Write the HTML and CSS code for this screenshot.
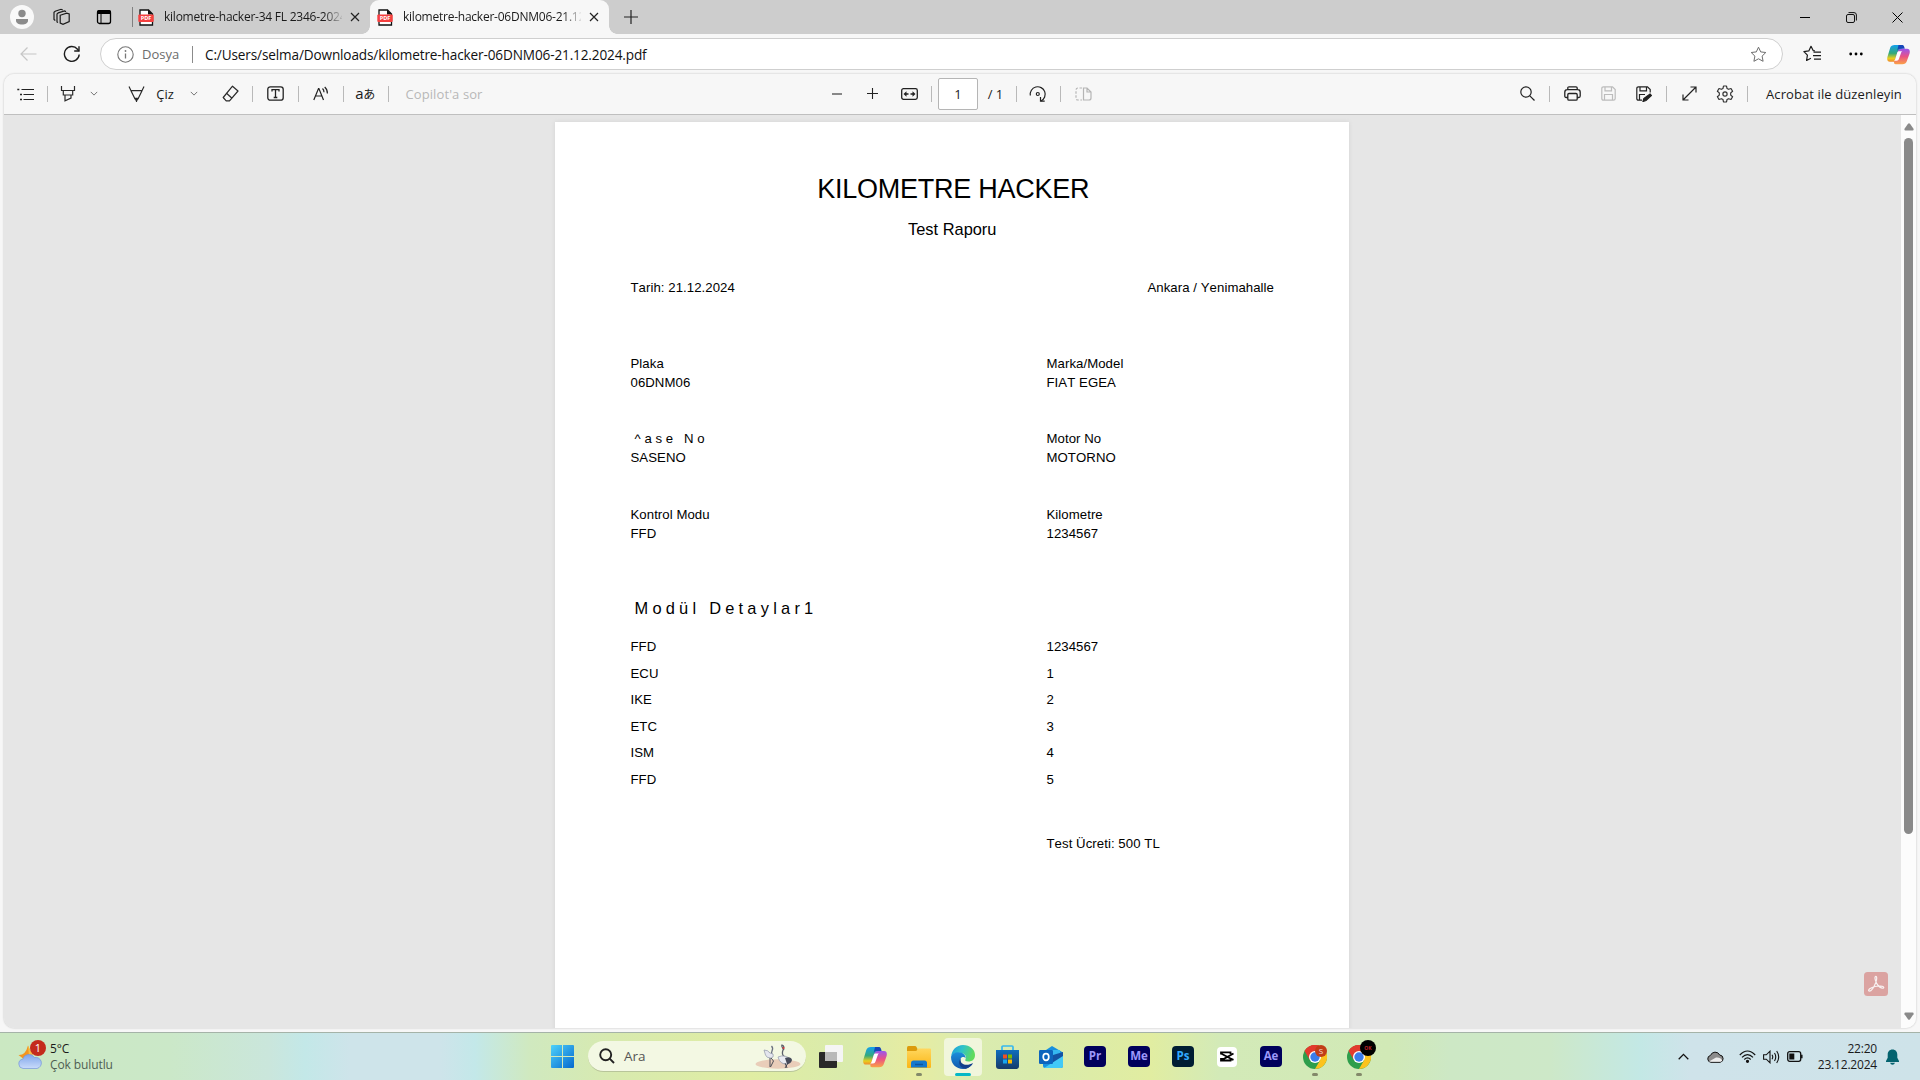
FILE: index.html
```html
<!DOCTYPE html>
<html lang="tr">
<head>
<meta charset="utf-8">
<title>kilometre-hacker-06DNM06-21.12.2024.pdf</title>
<link rel="stylesheet" href="styles.css">
</head>
<body>
<svg class="defs" width="0" height="0" aria-hidden="true">
  <defs>
    <linearGradient id="cpA" x1="0" y1="0" x2="0" y2="1"><stop offset="0" stop-color="#12a0ee"/><stop offset=".5" stop-color="#35a97a"/><stop offset=".8" stop-color="#e8cf1d"/><stop offset="1" stop-color="#f08a2c"/></linearGradient>
    <linearGradient id="cpB" x1="0" y1="0" x2="0" y2="1"><stop offset="0" stop-color="#9a55ee"/><stop offset=".5" stop-color="#ea5285"/><stop offset="1" stop-color="#fba246"/></linearGradient>
    <linearGradient id="win" x1="0" y1="0" x2="1" y2="1"><stop offset="0" stop-color="#4fd2fa"/><stop offset="1" stop-color="#0468cf"/></linearGradient>
    <linearGradient id="edgeA" x1="0" y1="0" x2="1" y2=".3"><stop offset="0" stop-color="#1a9be0"/><stop offset=".5" stop-color="#2fc3c8"/><stop offset="1" stop-color="#5fdb5c"/></linearGradient>
    <linearGradient id="edgeB" x1="0" y1="0" x2="0" y2="1"><stop offset="0" stop-color="#1b8edb"/><stop offset="1" stop-color="#1158ad"/></linearGradient>
    <linearGradient id="fold" x1="0" y1="0" x2="0" y2="1"><stop offset="0" stop-color="#ffd75e"/><stop offset="1" stop-color="#fbb616"/></linearGradient>
    <linearGradient id="store" x1="0" y1="0" x2="0" y2="1"><stop offset="0" stop-color="#0e6ebe"/><stop offset="1" stop-color="#173a69"/></linearGradient>
    <linearGradient id="cloud" x1="0" y1="0" x2="0" y2="1"><stop offset="0" stop-color="#7fa5ea"/><stop offset="1" stop-color="#c9dbfb"/></linearGradient>
    <symbol id="i-pdf" viewBox="0 0 16 17"><path d="M2 16V1h8.500l4 4v11z" fill="#fff" stroke="#111" stroke-width="1.300"/><path d="M10 .6V5.500h5z" fill="#111"/><rect x=".3" y="5.500" width="15.400" height="7.500" rx="1" fill="#f5403f"/><text x="8" y="11.300" text-anchor="middle" class="pdf-label">PDF</text></symbol>
    <symbol id="i-close" viewBox="0 0 10 10"><path d="M1 1l8 8M9 1L1 9" fill="none" stroke="#222" stroke-width="1.200"/></symbol>
    <symbol id="i-down" viewBox="0 0 10 6"><path d="M1 1l4 4 4-4" fill="none" stroke="#555" stroke-width="1"/></symbol>
    <symbol id="i-copilot" viewBox="0 0 24 22"><path d="M8 1h7c1.500 0 2 1 1.500 2.500L13 15c-.8 2.500-2 3.500-4.500 3.500H3C.5 18.500-.3 16.500.4 13.500L3.300 4C4 2 5.500 1 8 1z" fill="url(#cpA)"/><path d="M12 1h4c1.500 0 2 1.500 2.600 4H13.500c-1.500 0-2.500 1-3 2.500z" fill="#1646b9"/><path d="M16 21.200H9c-1.500 0-2-1-1.500-2.500L11 8.500C11.800 6 13 5 15.500 5H21c2.500 0 3.300 2 2.600 5l-2.900 8.200c-.7 2-2.200 3-4.700 3z" fill="url(#cpB)"/><path d="M14 7.500h-1.500c-1 0-1.500.6-1.800 1.500L8.500 16c-.3.800-.8 1.300-1.500 1.500h3c1.500 0 2-.8 2.500-2l2.300-6.500c.2-.7.600-1.200 1.200-1.500z" fill="#fff"/></symbol>
    <symbol id="i-chrome" viewBox="0 0 24 24"><circle cx="12" cy="12" r="12" fill="#2e9e4c"/><path d="M1.600 6A12 12 0 0 1 22.400 6H12z" fill="#e23b2e"/><path d="M1.600 6A12 12 0 0 1 22.400 6L12 6.500 6.800 15z" fill="#e23b2e"/><path d="M22.400 6A12 12 0 0 1 12 24l5.200-9L14 6z" fill="#fcc31e"/><circle cx="12" cy="12" r="6" fill="#fff"/><circle cx="12" cy="12" r="4.700" fill="#3b7cec"/></symbol>
  </defs>
</svg>

<header class="tabbar">
  <div class="tab-tools">
    <svg width="24" height="24" viewBox="0 0 24 24"><circle cx="12" cy="12" r="12" fill="#f9f9f9"/><circle cx="12" cy="8.500" r="3.700" fill="#8b8b8b"/><path d="M6 14h12v1.500c0 2.500-2.500 4-6 4s-6-1.500-6-4z" fill="#8b8b8b"/></svg>
    <svg width="18" height="18" viewBox="0 0 18 18" fill="none" stroke="#1b1b1b" stroke-width="1.200"><path d="M7.200 7.200l6.500-2 2.500.8v7.500l-6.200 2.900-2.800-1.300z"/><path d="M5 14.500l-1-.6V6l1.300-1.200L11.500 3l1.500.6M2.300 12.500L1 11.500V4.300l1.200-1L8 1.300l1.800.7"/></svg>
    <svg width="16" height="16" viewBox="0 0 16 16"><rect x="1.500" y="1.700" width="13" height="12.800" rx="2" fill="none" stroke="#000" stroke-width="1.300"/><path d="M1 5V3q0-2 2-2h10q2 0 2 2v2z"/><path d="M5 5v9" stroke="#000" stroke-width="1"/></svg>
  </div>
  <div class="tab tab-idle">
    <svg class="tab-icon"><use href="#i-pdf"/></svg><span class="tab-title">kilometre-hacker-34 FL 2346-2024</span><svg class="tab-close"><use href="#i-close"/></svg>
  </div>
  <div class="tab tab-active">
    <svg class="tab-icon"><use href="#i-pdf"/></svg><span class="tab-title">kilometre-hacker-06DNM06-21.12</span><svg class="tab-close"><use href="#i-close"/></svg>
  </div>
  <svg class="new-tab" width="14" height="14" viewBox="0 0 14 14"><path d="M7 0v14M0 7h14" stroke="#222" stroke-width="1.200"/></svg>
  <div class="window-buttons">
    <svg width="10" height="10"><path d="M0 5.500h10" stroke="#000"/></svg>
    <svg width="11" height="11" viewBox="0 0 11 11" fill="none" stroke="#111"><rect x=".5" y="2.500" width="8" height="8" rx="1.500"/><path d="M2.500 .6H8q2.400 0 2.400 2.400v5.500"/></svg>
    <svg width="11" height="11" viewBox="0 0 11 11"><path d="M.5 .5l10 10M10.500 .5l-10 10" stroke="#000"/></svg>
  </div>
</header>

<nav class="addressbar">
  <svg class="back" width="17" height="14" viewBox="0 0 17 14" fill="none" stroke="#c6c6c6" stroke-width="1.200"><path d="M16.500 7H1M7.500 .5L1 7l6.500 6.500"/></svg>
  <svg class="reload" width="18" height="18" viewBox="0 0 18 18" fill="none" stroke="#1d1d1d" stroke-width="1.400"><path d="M16.200 9.500A7.400 7.400 0 1 1 14.500 4.200L15.800 6"/><path d="M16 1.200V6h-4.800"/></svg>
  <div class="url-box">
    <svg width="17" height="17" viewBox="0 0 17 17"><circle cx="8.500" cy="8.500" r="7.700" fill="none" stroke="#777" stroke-width="1.100"/><path d="M8.500 7.500v5" stroke="#777" stroke-width="1.300"/><circle cx="8.500" cy="5" r=".9" fill="#777"/></svg>
    <span class="scheme">Dosya</span>
    <span class="url">C:/Users/selma/Downloads/kilometre-hacker-06DNM06-21.12.2024.pdf</span>
    <svg class="star" width="17" height="17" viewBox="0 0 17 17"><path d="M8.500 1.200l2.200 4.700 5.100.6-3.700 3.600 1 5.200-4.600-2.500-4.600 2.500 1-5.200L1.200 6.500l5.100-.6z" fill="none" stroke="#6d6d6d" stroke-linejoin="round"/></svg>
  </div>
  <div class="browser-actions">
    <svg width="18" height="18" viewBox="0 0 18 18" fill="none" stroke="#1a1a1a" stroke-width="1.200" stroke-linejoin="round"><path d="M12 5.900L10.300 5.700 8 1.300 5.800 5.900.9 6.600l3.500 3.500-.8 5.400 4.300-2.300"/><path d="M10.500 7.200H18M10 10.700h8M11 14.200h7"/></svg>
    <svg width="14" height="4" viewBox="0 0 14 4"><circle cx="1.700" cy="2" r="1.400"/><circle cx="7" cy="2" r="1.400"/><circle cx="12.300" cy="2" r="1.400"/></svg>
    <svg width="23" height="21"><use href="#i-copilot"/></svg>
  </div>
</nav>

<main class="viewer">
  <div class="toolbar">
    <div class="tools-left">
      <svg width="17" height="14" viewBox="0 0 17 14"><path d="M4.500 2.500H17M6.500 7.500H17M6.500 12.500H17" stroke="#222" stroke-width="1.200"/><path d="M.3 2.500h2M3 7.500h2M3 12.500h2" stroke="#222" stroke-width="1.700"/></svg>
      <i class="sep"></i>
      <svg width="16" height="17" viewBox="0 0 16 17" fill="none" stroke="#2a2a2a" stroke-width="1.200"><path d="M1.500 1v4.500h13V1M3.300 5.500V10h9.400V5.500M5 10v5.800l6-2.800v-3"/></svg>
      <svg width="8" height="5"><use href="#i-down"/></svg>
      <svg class="pen" width="17" height="17" viewBox="0 0 17 17" fill="none" stroke="#2a2a2a" stroke-width="1.200"><path d="M1 1.500l2 4.200h11l2-4.200M3 5.700l4 8.300h3l4-8.300"/><path d="M7.300 13.300h2.400l-1.200 3z" fill="#222"/></svg>
      <span class="label">Çiz</span>
      <svg width="8" height="5"><use href="#i-down"/></svg>
      <svg width="17" height="17" viewBox="0 0 17 17" fill="none" stroke="#2a2a2a" stroke-width="1.200" stroke-linejoin="round"><path d="M10.500 1.200L16 6 7.500 15.800H4.200L1.200 12.500z"/><path d="M4.500 8.300l5.500 4.900"/></svg>
      <i class="sep"></i>
      <svg width="17" height="15" viewBox="0 0 17 15" fill="none" stroke="#222" stroke-width="1.300"><rect x=".8" y=".8" width="15.400" height="13.400" rx="2.500"/><path d="M5 5.500V3.700h7v1.800M8.500 3.700v8M6.700 11.500h3.600"/></svg>
      <i class="sep"></i>
      <svg width="16" height="15" viewBox="0 0 16 15" fill="none" stroke="#222" stroke-width="1.200"><path d="M.8 14L5.500 2.500h.4L10.500 14M2.500 10h6.400M9.500 2.500Q11 3.800 11 6.300M11.700 1Q14.500 3.500 14.400 7.500"/></svg>
      <i class="sep"></i>
      <span class="translate">a<span class="kana">あ</span></span>
      <i class="sep"></i>
      <span class="copilot-ask">Copilot'a sor</span>
    </div>
    <div class="tools-center">
      <svg width="10" height="2"><path d="M0 1h10" stroke="#888" stroke-width="2"/></svg>
      <svg width="11" height="11"><path d="M5.500 0v11M0 5.500h11" stroke="#222" stroke-width="1.100"/></svg>
      <svg width="17" height="12" viewBox="0 0 17 12"><rect x=".7" y=".7" width="15.600" height="10.600" rx="1.800" fill="none" stroke="#222" stroke-width="1.300"/><path d="M2.500 6l3-2.700v2h2v1.400h-2v2zM14.500 6l-3-2.700v2h-2v1.400h2v2z" fill="#222"/></svg>
      <i class="sep"></i>
      <span class="page-input">1</span>
      <span class="page-count">/ 1</span>
      <i class="sep"></i>
      <svg width="18" height="18" viewBox="0 0 18 18" fill="none" stroke="#222" stroke-width="1.200"><path d="M1.300 10.500A7.500 7.500 0 1 1 12 16"/><path d="M11.500 12v4.200h4.200"/><circle cx="8.800" cy="9" r="1.500"/></svg>
      <i class="sep"></i>
      <svg width="17" height="14" viewBox="0 0 17 14" fill="none" stroke="#b5b5b5" stroke-width="1.200"><path d="M7 1H3Q1 1 1 3v8q0 2 2 2h4" stroke-dasharray="2.500 1.500"/><path d="M8.500 1H12l4 4v6q0 2-2 2H8.500zM12 1v4h4"/></svg>
    </div>
    <div class="tools-right">
      <svg width="15" height="15" viewBox="0 0 15 15" fill="none" stroke="#222" stroke-width="1.200"><circle cx="6" cy="6" r="5.200"/><path d="M9.800 9.800l4.700 4.700"/></svg>
      <i class="sep"></i>
      <svg width="17" height="15" viewBox="0 0 17 15" fill="none" stroke="#222" stroke-width="1.300"><path d="M3.800 11.500H2.300Q.8 11.500.8 10V6.200Q.8 3.700 3.300 3.700h10.400q2.500 0 2.500 2.500V10q0 1.500-1.500 1.500h-1.500M3.800 3.700V2Q3.800.8 5 .8h7q1.200 0 1.200 1.200v1.700"/><rect x="3.800" y="7.500" width="9.400" height="6.700" rx="1.200"/></svg>
      <svg width="15" height="15" viewBox="0 0 15 15" fill="none" stroke="#bcbcbc" stroke-width="1.200"><path d="M.8 2.500Q.8.800 2.500.8h9l2.700 2.700v9q0 1.700-1.700 1.700h-10Q.8 14.200.8 12.500zM4 .8v4h6.500v-4M3.500 14V8.500h8V14"/></svg>
      <svg width="16" height="16" viewBox="0 0 16 16" fill="none" stroke="#222" stroke-width="1.200"><path d="M6 14.200H2.500Q.8 14.200.8 12.500v-10Q.8.800 2.500.8h9l2.700 2.700v3M4 .8v4h6.500v-4M3.500 14V8.500H9"/><path d="M14 8l1.500 1.500-5.500 5-3 1 .8-3z" fill="#222"/></svg>
      <i class="sep"></i>
      <svg width="15" height="15" viewBox="0 0 15 15" fill="none" stroke="#222" stroke-width="1.200"><path d="M1 14L14 1M8.500 1H14v5.500M1 8.500V14h5.500"/></svg>
      <svg width="18" height="18" viewBox="0 0 18 18" fill="none" stroke="#333" stroke-width="1.200" stroke-linejoin="round"><path d="M7.500 1h3l.5 2.400 1.600.9 2.400-.8 1.600 2.700-1.900 1.700v2.200l1.900 1.700-1.600 2.700-2.400-.8-1.600.9-.5 2.400h-3L7 14.600l-1.600-.9-2.400.8-1.600-2.700 1.900-1.700V7.900L1.400 6.200 3 3.500l2.400.8L7 3.400z"/><circle cx="9" cy="9" r="2.100"/></svg>
      <i class="sep"></i>
      <span class="acrobat">Acrobat ile düzenleyin</span>
    </div>
  </div>

  <div class="canvas">
    <div class="document-area">
      <article class="sheet">
        <h1>KILOMETRE HACKER</h1>
        <p class="subtitle">Test Raporu</p>
        <div class="meta"><span>Tarih: 21.12.2024</span><span class="place">Ankara / Yenimahalle</span></div>
        <div class="fields">
          <div>Plaka<br>06DNM06</div><div>Marka/Model<br>FIAT EGEA</div>
          <div><span class="spaced">^ase No</span><br>SASENO</div><div>Motor No<br>MOTORNO</div>
          <div>Kontrol Modu<br>FFD</div><div>Kilometre<br>1234567</div>
        </div>
        <h2>Modül Detaylar1</h2>
        <div class="modules">
          <span>FFD</span><span>1234567</span>
          <span>ECU</span><span>1</span>
          <span>IKE</span><span>2</span>
          <span>ETC</span><span>3</span>
          <span>ISM</span><span>4</span>
          <span>FFD</span><span>5</span>
        </div>
        <p class="fee">Test Ücreti: 500 TL</p>
      </article>
      <svg class="acrobat-badge" width="24" height="24" viewBox="0 0 24 24"><rect width="24" height="24" rx="3.500" fill="#dba3a1"/><path d="M11.500 4.500c1.500-.6 1.600 2.500.3 6C10 15 7 19.500 5 19c-1.500-.8 1.500-3.500 6-4.500 4-.9 8.500-.6 8.800.9.100 1.500-3 1-5.300-1.400C12 11.500 10 5.500 11.500 4.500z" fill="none" stroke="#f8f1f1" stroke-width="1.200"/></svg>
    </div>
    <div class="scrollbar">
      <svg width="10" height="8" viewBox="0 0 10 8"><path d="M4 .8q1-1 2 0l3.500 5Q10 7.500 8.500 7.500h-7Q0 7.500.5 5.800z" fill="#8a8a8a"/></svg>
      <div class="thumb"></div>
      <svg width="10" height="8" viewBox="0 0 10 8"><path d="M4 7.200q1 1 2 0l3.500-5Q10 .5 8.500 .5h-7Q0 .5.500 2.200z" fill="#8a8a8a"/></svg>
    </div>
  </div>
</main>

<footer class="taskbar">
  <div class="weather">
    <div class="weather-icon">
      <svg width="24" height="26" viewBox="0 0 24 26"><path d="M10 1.500q1.500 5 5 8.500L8 16l-3-1.500L.5 11q7 .5 9.500-9.500z" fill="#f4951d"/><path d="M10 1.500q1.500 5 5 8.500l-4 2z" fill="#f6bc45"/><path d="M5 24.500a4.700 4.700 0 0 1-.3-9.300A6.500 6.500 0 0 1 16.500 13.500a5.500 5.500 0 0 1 2.500 11z" fill="url(#cloud)" stroke="#7596da" stroke-width=".7"/></svg>
      <span class="weather-badge">1</span>
    </div>
    <div class="weather-text"><span class="temp">5°C</span><span class="sky">Çok bulutlu</span></div>
  </div>

  <div class="start"><svg width="23" height="23" viewBox="0 0 23 23"><path d="M0 1q0-1 1-1h10v11H0zM12 0h10q1 0 1 1v10H12zM0 12h11v11H1q-1 0-1-1zM12 12h11v10q0 1-1 1H12z" fill="url(#win)"/></svg></div>
  <div class="search">
    <svg width="16" height="16" viewBox="0 0 16 16" fill="none" stroke="#222" stroke-width="1.900"><circle cx="6.700" cy="6.700" r="5.500"/><path d="M10.700 10.700l4.300 4.300"/></svg>
    <span>Ara</span>
    <svg class="cranes" width="46" height="25" viewBox="0 0 46 25"><ellipse cx="23" cy="20" rx="22.500" ry="4.700" fill="#e9cdb9"/><path d="M16.500 2q2 2 .5 5-1 2 0 4" fill="none" stroke="#6a7080" stroke-width="1.300"/><path d="M9 6q4 0 6 3l3 1q1 4-2.500 4-4 0-5-3z" fill="#e4e6ee" stroke="#8f96a8" stroke-width=".7"/><path d="M15 14v9M16 14l2.500 3-3 6" fill="none" stroke="#3b3f4c" stroke-width=".9"/><path d="M29 6q-3-4-2-5 3 1 1 5-2 5 2 7" fill="none" stroke="#5c606c" stroke-width="1.300"/><path d="M23 13q7-3 12 2l-2 5q-8 1-10-7z" fill="#e9ebf2" stroke="#8f96a8" stroke-width=".7"/><path d="M30 14q6-2 7 2-1 4-5 4z" fill="#464b5a"/><path d="M30 19l2 5M33 19l-3 5" stroke="#3b3f4c" stroke-width=".9"/><circle cx="28.500" cy="4" r="1.100" fill="#d8383c"/></svg>
  </div>
  <div class="apps">
    <div class="app"><svg width="24" height="23" viewBox="0 0 24 23"><rect x="6" y="0" width="18" height="17" rx="1" fill="#f5f5f5"/><rect y="7" width="18" height="16" rx="1" fill="#292929"/><path d="M6 7h12v9H6z" fill="#b9b9b9"/></svg></div>
    <div class="app"><svg width="24" height="22"><use href="#i-copilot"/></svg></div>
    <div class="app running"><svg width="24" height="22" viewBox="0 0 24 22"><path d="M0 1.500Q0 0 1.500 0H8q1 0 1.500 1L10.500 3v3H0z" fill="#dc9b0c"/><path d="M0 5h8.500q1 0 1.500-.7L11.200 2.500H23q1 0 1 1V21q0 1-1 1H1q-1 0-1-1z" fill="url(#fold)"/><path d="M4 21.500V17q0-2.500 2.500-2.500h11Q20 14.500 20 17v4.500z" fill="#1478ce"/><path d="M8 18.500h8" stroke="#0c55a3" stroke-width="1.500"/></svg></div>
    <div class="app current"><svg width="24" height="24" viewBox="0 0 24 24"><path d="M.2 11.500C.7 5 5.500 0 12 0c7 0 12 4.500 12 10 0 4.500-3 6.500-6.500 6.500-3 0-3.700-1-3-2.300C16.500 10.500 12 7.500 8 7.800 4 8 1 10 .2 11.500z" fill="url(#edgeA)"/><path d="M.1 11.500C1 9 4 7 8 7.200c4 .2 7 3 6.500 6-1-1.800-3.500-1.700-4.700 0-1.600 2.500.2 6.800 4.200 7.600 3 .6 6-.4 7.500-2.300C19.500 22 16 24 12 24 5 24-.5 18.500.1 11.500z" fill="url(#edgeB)"/><path d="M9.800 13.200C6 18 9.500 23 14.500 23.700 18 23 21 20.700 22 18c-6 3.700-14 1.500-12.200-4.800z" fill="#123f8c"/></svg></div>
    <div class="app"><svg width="23" height="24" viewBox="0 0 23 24"><path d="M6 6V2q0-1 1-1h9q1 0 1 1v4" fill="none" stroke="#37b8ee" stroke-width="1.700"/><path d="M0 5h23v16q0 3-3 3H3q-3 0-3-3z" fill="url(#store)"/><path d="M7 9.500h4v4H7z" fill="#f25022"/><path d="M12 9.500h4v4h-4z" fill="#7fba00"/><path d="M7 14.500h4v4H7z" fill="#18a6ee"/><path d="M12 14.500h4v4h-4z" fill="#ffb900"/></svg></div>
    <div class="app"><svg width="24" height="22" viewBox="0 0 24 22"><path d="M4 6l9-6 11 6.500V20q0 2-2 2H6q-2 0-2-2z" fill="#1790df"/><path d="M10 4h11v12H10z" fill="#35b8f1"/><path d="M14 9l10-3v5l-12 8z" fill="#1353a3"/><path d="M5 22l19-12v10q0 2-2 2z" fill="#42c9f7"/><rect y="4" width="14" height="14" rx="1.200" fill="#0d64bd"/><ellipse cx="7" cy="11" rx="2.800" ry="3.300" fill="none" stroke="#fff" stroke-width="1.700"/></svg></div>
    <div class="app"><span class="adobe">Pr</span></div>
    <div class="app"><span class="adobe">Me</span></div>
    <div class="app"><span class="adobe photoshop">Ps</span></div>
    <div class="app"><span class="capcut"><svg width="14" height="11" viewBox="0 0 14 11" fill="none" stroke="#000" stroke-width="1.800"><path d="M13.500 2.500L3.500 8H1V9.500h9.500V7.500L1 2.500M1 3.500V1.300h9.500V3M10 7.300l3.500 1.500"/></svg></span></div>
    <div class="app"><span class="adobe">Ae</span></div>
    <div class="app running"><svg width="24" height="24"><use href="#i-chrome"/></svg><span class="profile">S</span></div>
    <div class="app running"><svg width="24" height="24"><use href="#i-chrome"/></svg><span class="profile profile-dark">OK</span></div>
  </div>

  <div class="tray">
    <svg width="11" height="7" viewBox="0 0 11 7"><path d="M.7 6.200l4.800-4.800 4.800 4.800" fill="none" stroke="#111" stroke-width="1.300"/></svg>
    <svg width="17" height="12" viewBox="0 0 17 12"><path d="M4 11.300A3.500 3.500 0 0 1 3.500 4.400 5 5 0 0 1 12.700 4a3.700 3.700 0 0 1 .5 7.300z" fill="#8c8c8c" stroke="#111"/><path d="M2 10.500L9 6.500q4.500-.5 6.300 3-.8 1.300-2.100 1.300H4z" fill="#eee"/></svg>
    <svg width="17" height="13" viewBox="0 0 17 13" fill="none" stroke="#111" stroke-width="1.200"><path d="M.8 5Q8.500-3 16.200 5M3 7.300q5.500-5.500 11 0M5.300 9.500q3.200-3.200 6.400 0"/><circle cx="8.500" cy="11.300" r="1" fill="#111"/></svg>
    <svg width="17" height="14" viewBox="0 0 17 14" fill="none" stroke="#111" stroke-width="1.100"><path d="M.6 4.800h2.700L7 1.200v11.600L3.300 9.200H.6zM9 4.700q1.500 2.300 0 4.600M11.500 3q2.500 4 0 8M13.700 1q4 6 0 12"/></svg>
    <svg width="16" height="11" viewBox="0 0 16 11"><rect x=".7" y=".7" width="13" height="9.600" rx="2" fill="none" stroke="#111" stroke-width="1.300"/><rect x="2.300" y="2.500" width="5" height="6" fill="#111"/><path d="M14.800 3.700v3.600" stroke="#111" stroke-width="1.500"/></svg>
    <div class="clock"><span>22:20</span><span>23.12.2024</span></div>
    <svg class="bell" width="13" height="16" viewBox="0 0 13 16"><path d="M6.500 .5c3 0 4.800 2.200 4.800 5v3.200L13 12v1H0v-1l1.700-3.300V5.500c0-2.800 1.800-5 4.800-5zM4 13.800h5q-.7 1.900-2.500 1.900T4 13.800z" fill="#04636f"/></svg>
  </div>
</footer>
</body>
</html>
```
FILE: styles.css
```css
* { box-sizing: border-box; }

body {
  margin: 0;
  width: 1920px;
  height: 1080px;
  overflow: hidden;
  display: grid;
  grid-template-rows: 34px 40px 958px 48px;
  background: #f7f7f7;
  color: #1a1a1a;
  font-family: "Open Sans", "Noto Sans", sans-serif;
  font-size: 13px;
}

svg { display: block; flex: none; }
.defs { position: absolute; }
h1, h2, p { margin: 0; font-weight: 400; }

/* Tab strip */
.tabbar { display: flex; align-items: center; background: #cdcdcd; }
.tab-tools {
  width: 133px;
  height: 20px;
  padding-left: 10px;
  display: grid;
  grid-template-columns: 24px 56px 28px;
  grid-template-rows: 20px;
  align-items: center;
  justify-items: center;
  border-right: 1px solid #808080;
}
.tab { height: 34px; display: flex; align-items: center; }
.tab-idle { width: 237px; padding-left: 5px; }
.tab-active {
  position: relative;
  width: 239px;
  padding-left: 7px;
  background: #f7f7f7;
  border-radius: 9px 9px 0 0;
}
.tab-active::before,
.tab-active::after {
  content: "";
  position: absolute;
  bottom: 0;
  width: 8px;
  height: 8px;
}
.tab-active::before { left: -8px; background: radial-gradient(circle at 0 0, #cdcdcd 7.5px, #f7f7f7 8px); }
.tab-active::after { right: -8px; background: radial-gradient(circle at 100% 0, #cdcdcd 7.5px, #f7f7f7 8px); }
.tab-icon { width: 16px; height: 17px; }
.tab-title {
  width: 178px;
  margin-left: 10px;
  overflow: hidden;
  white-space: nowrap;
  font-size: 12px;
  line-height: 16px;
  letter-spacing: -0.24px;
  mask-image: linear-gradient(90deg, #000 160px, transparent 180px);
}
.tab-close { width: 10px; height: 10px; margin-left: 8px; }
.pdf-label { font: 700 5.6px "Open Sans", sans-serif; fill: #fff; }
.new-tab { margin-left: 15px; }
.window-buttons {
  margin-left: auto;
  display: grid;
  grid-template-columns: repeat(3, 46px);
  justify-items: center;
  align-items: center;
}

/* Address bar */
.addressbar { display: flex; align-items: center; }
.back { margin-left: 20px; }
.reload { margin-left: 26px; }
.url-box {
  width: 1683px;
  height: 32px;
  margin-left: 19px;
  padding: 0 15px 0 16px;
  display: flex;
  align-items: center;
  background: #fff;
  border: 1px solid #cfcfcf;
  border-radius: 16px;
}
.scheme {
  width: 51px;
  height: 17px;
  margin: 0 12px 0 8px;
  border-right: 1px solid #8b8b8b;
  line-height: 17px;
  color: #6c6c6c;
}
.url { color: #111; font-size: 13.6px; letter-spacing: -0.14px; white-space: nowrap; }
.star { margin-left: auto; }
.browser-actions {
  margin-left: 8px;
  display: grid;
  grid-template-columns: 42px 46px 38px;
  justify-items: center;
  align-items: center;
}

/* PDF viewer */
.viewer {
  margin: 0 4px 4px;
  border-radius: 10px;
  overflow: hidden;
  display: flex;
  flex-direction: column;
  box-shadow: 0 0 2px #b5b5b5;
}
.toolbar {
  height: 41px;
  padding-bottom: 1px;
  display: flex;
  align-items: center;
  background: #f7f7f7;
  border-bottom: 1px solid #bfbfbf;
}
.tools-left, .tools-center, .tools-right {
  display: grid;
  align-items: center;
  justify-items: center;
}
.tools-left {
  width: 816px;
  padding-left: 3px;
  grid-template-columns: 36px 8px 34px 18px 16px 34px 24px 34px 38px 7px 38px 8px 38px 6px 38px 8px 104px;
}
.pen { grid-column: 6; }
.tools-center { width: 689px; grid-template-columns: 34px 36px 39px 5px 48px 27px 14px 30px 15px 30px; }
.tools-right { grid-template-columns: 36px 9px 36px 36px 36px 9px 36px 36px 9px 149px; }
.sep { width: 1px; height: 16px; background: #b9b9b9; }
.label { letter-spacing: -0.1px; }
.translate { font: 15px/16px "Open Sans", "Noto Sans CJK JP", sans-serif; letter-spacing: -0.5px; }
.kana { font-size: 12px; }
.copilot-ask { color: #b8b8b8; white-space: nowrap; letter-spacing: 0.1px; }
.page-input {
  width: 40px;
  height: 32px;
  border: 1px solid #b5b5b5;
  border-radius: 2px;
  background: #fff;
  line-height: 30px;
  text-align: center;
}
.acrobat { justify-self: start; margin-left: 14px; white-space: nowrap; letter-spacing: 0.1px; }
.canvas { flex: 1; display: flex; background: #e6e6e6; overflow: hidden; }
.document-area { position: relative; width: 1897px; padding: 7px 0 0 551px; }
.sheet {
  width: 794px;
  height: 920px;
  padding: 51px 75px 0 75.5px;
  background: #fff;
  box-shadow: 0 0 4px #d2d2d2;
  color: #000;
  font: 13.2px/19px "Liberation Sans", Arial, sans-serif;
}
.sheet h1 { padding-left: 2px; font-size: 27px; line-height: 32px; letter-spacing: -0.24px; text-align: center; }
.subtitle { margin-top: 13.6px; font-size: 16.4px; line-height: 20px; text-align: center; }
.meta { margin-top: 39.4px; display: flex; justify-content: space-between; }
.meta, .fields, .modules, .fee { font-kerning: none; letter-spacing: 0.06px; }
.fields {
  margin-top: 57px;
  display: grid;
  grid-template-columns: 416px 1fr;
  row-gap: 37.5px;
}
.spaced { padding-left: 4px; letter-spacing: 3.7px; }
.sheet h2 { margin-top: 54.8px; padding-left: 4px; font-size: 16.4px; line-height: 20px; letter-spacing: 4.24px; }
.modules {
  margin-top: 16.4px;
  display: grid;
  grid-template-columns: 416px 1fr;
  line-height: 26.55px;
}
.fee { margin: 40.5px 0 0 416px; }
.acrobat-badge { position: absolute; right: 13px; bottom: 32px; }
.scrollbar {
  width: 15px;
  padding: 8px 0;
  display: flex;
  flex-direction: column;
  align-items: center;
  background: #fcfcfc;
}
.thumb { width: 9px; height: 696px; margin: 7px 0 auto; border-radius: 5px; background: #8a8a8a; }

/* Taskbar */
.taskbar {
  display: flex;
  align-items: center;
  border-top: 1px solid #a5b3a8;
  background: linear-gradient(90deg, #cbe8c2 0, #cbe8c8 170px, #cae6dc 270px, #c3e8e8 305px, #cee4ea 350px, #cee4ea 440px, #c3e8e9 475px, #d0e9bf 530px, #d8eaae 620px, #e0eda3 750px, #d9ebac 850px, #e7eca1 915px, #dbecb0 965px, #d9ebad 1030px, #e1eda1 1150px, #d3eab8 1220px, #d1e9b6 1390px, #cde8c5 1450px, #cde8c8 1550px, #c3e8e5 1640px, #cfe3ea 1690px, #cee3e9 100%);
}
.weather { width: 540px; padding-left: 18px; display: flex; align-items: center; }
.weather-icon { position: relative; }
.weather-badge {
  position: absolute;
  left: 12px;
  top: -4px;
  width: 16px;
  height: 16px;
  border-radius: 50%;
  background: #c42b1c;
  color: #fff;
  font-size: 11px;
  line-height: 16px;
  text-align: center;
}
.weather-text { margin-left: 8px; display: grid; font-size: 12px; line-height: 16px; letter-spacing: -0.1px; }
.sky { color: #4f5f53; }
.start { width: 48px; display: grid; padding-left: 11px; }
.search {
  width: 218px;
  height: 31px;
  padding: 0 5px 0 11px;
  display: flex;
  align-items: center;
  border-radius: 16px;
  border-bottom: 1px solid #b8c59a;
  background: #f3f8e3;
  color: #555;
  font-size: 13.5px;
}
.search span { margin-left: 9px; }
.cranes { margin-left: auto; }
.apps { width: 550px; margin-left: 3px; display: grid; grid-template-columns: repeat(13, 44px); }
.app {
  position: relative;
  height: 40px;
  display: grid;
  place-items: center;
}
.running::after, .current::after {
  content: "";
  position: absolute;
  bottom: 1px;
  left: 19px;
  width: 6px;
  height: 3px;
  border-radius: 2px;
  background: #83896a;
}
.current::before {
  content: "";
  position: absolute;
  inset: 1px 3px;
  border-radius: 4px;
  background: #f1f6dc;
}
.current svg { position: relative; }
.current::after { left: 14px; width: 16px; background: #05b8c6; }
.adobe {
  width: 22px;
  height: 21px;
  border-radius: 4px;
  background: #00005c;
  color: #9c98fb;
  font: 700 11.5px/20px "Open Sans", sans-serif;
  text-align: center;
}
.photoshop { background: #001d33; color: #31a8ff; }
.capcut {
  width: 20px;
  height: 20px;
  display: grid;
  place-items: center;
  border-radius: 4px;
  background: #fff;
}
.profile {
  position: absolute;
  left: 22px;
  top: 8px;
  width: 12px;
  height: 12px;
  border-radius: 50%;
  background: #c23d18;
  color: #f6ddd5;
  font-size: 8px;
  line-height: 12px;
  text-align: center;
}
.profile-dark {
  left: 23px;
  top: 3px;
  width: 16px;
  height: 16px;
  background: #000;
  color: #c3202a;
  font-size: 5px;
  font-weight: 700;
  line-height: 16px;
}
.tray {
  margin-left: auto;
  padding-right: 21px;
  display: grid;
  grid-template-columns: 32px 32px 32px 16px 32px 66px 22px;
  align-items: center;
  justify-items: center;
}
.clock { display: grid; justify-self: end; font-size: 12px; line-height: 16px; letter-spacing: -0.2px; text-align: right; }
.bell { justify-self: end; }
```
